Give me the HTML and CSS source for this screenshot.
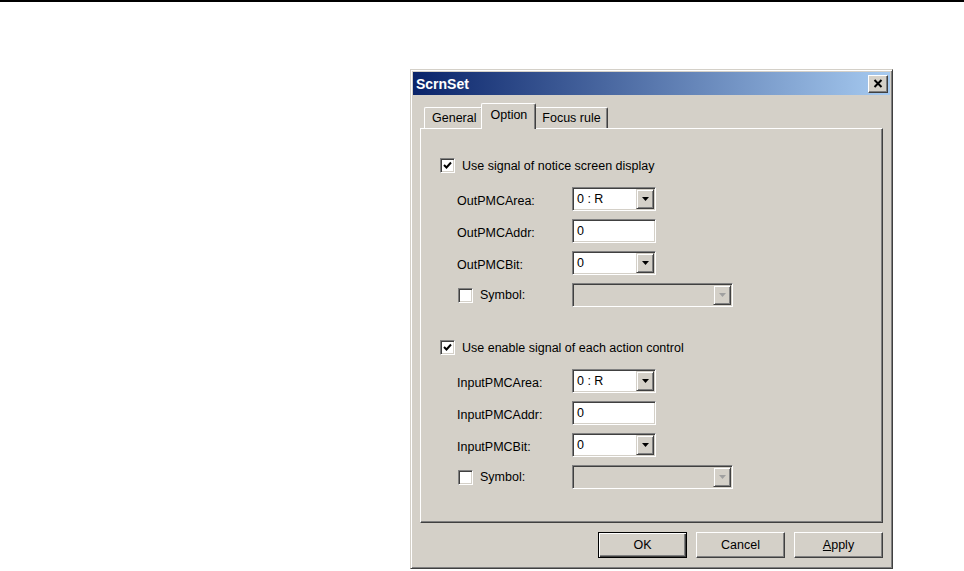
FILE: index.html
```html
<!DOCTYPE html>
<html lang="en">
<head>
  <meta charset="UTF-8">
  <title>ScrnSet</title>
  <link rel="stylesheet" href="styles.css">
</head>
<body>
  <div class="rule"></div>

  <div class="stage">
    <div class="window">
      <div class="titlebar">
        <span class="title">ScrnSet</span>
        <button class="close" type="button">
          <svg width="10" height="9" viewBox="0 0 10 9"><path d="M1.5 1 L8.5 8 M8.5 1 L1.5 8" stroke="#000" stroke-width="2" fill="none"/></svg>
        </button>
      </div>

      <div class="client">
        <div class="tabs">
          <div class="tab">General</div>
          <div class="tab active">Option</div>
          <div class="tab">Focus rule</div>
        </div>

        <div class="panel">
          <!-- notice screen display -->
          <div class="group">
            <div class="check-row">
              <span class="check"><svg width="9" height="9" viewBox="0 0 9 9"><path d="M1 4 L3.5 6.5 L8 1.5" stroke="#000" stroke-width="2" fill="none"/></svg></span>
              <span>Use signal of notice screen display</span>
            </div>
            <div class="fields">
              <div class="field">
                <span class="field-label">OutPMCArea:</span>
                <div class="combo">
                  <span class="combo-text">0 : R</span>
                  <span class="drop"><svg width="7" height="4" viewBox="0 0 7 4"><path d="M0 0 H7 L3.5 4 Z" fill="#000"/></svg></span>
                </div>
              </div>
              <div class="field">
                <span class="field-label">OutPMCAddr:</span>
                <div class="edit">0</div>
              </div>
              <div class="field">
                <span class="field-label">OutPMCBit:</span>
                <div class="combo">
                  <span class="combo-text">0</span>
                  <span class="drop"><svg width="7" height="4" viewBox="0 0 7 4"><path d="M0 0 H7 L3.5 4 Z" fill="#000"/></svg></span>
                </div>
              </div>
              <div class="field">
                <span class="field-label symbol"><span class="check"></span>Symbol:</span>
                <div class="combo wide disabled">
                  <span class="combo-text"></span>
                  <span class="drop"><svg width="7" height="4" viewBox="0 0 7 4"><path d="M0 0 H7 L3.5 4 Z" fill="#a0a0a0"/></svg></span>
                </div>
              </div>
            </div>
          </div>

          <!-- action control enable -->
          <div class="group">
            <div class="check-row">
              <span class="check"><svg width="9" height="9" viewBox="0 0 9 9"><path d="M1 4 L3.5 6.5 L8 1.5" stroke="#000" stroke-width="2" fill="none"/></svg></span>
              <span>Use enable signal of each action control</span>
            </div>
            <div class="fields">
              <div class="field">
                <span class="field-label">InputPMCArea:</span>
                <div class="combo">
                  <span class="combo-text">0 : R</span>
                  <span class="drop"><svg width="7" height="4" viewBox="0 0 7 4"><path d="M0 0 H7 L3.5 4 Z" fill="#000"/></svg></span>
                </div>
              </div>
              <div class="field">
                <span class="field-label">InputPMCAddr:</span>
                <div class="edit">0</div>
              </div>
              <div class="field">
                <span class="field-label">InputPMCBit:</span>
                <div class="combo">
                  <span class="combo-text">0</span>
                  <span class="drop"><svg width="7" height="4" viewBox="0 0 7 4"><path d="M0 0 H7 L3.5 4 Z" fill="#000"/></svg></span>
                </div>
              </div>
              <div class="field">
                <span class="field-label symbol"><span class="check"></span>Symbol:</span>
                <div class="combo wide disabled">
                  <span class="combo-text"></span>
                  <span class="drop"><svg width="7" height="4" viewBox="0 0 7 4"><path d="M0 0 H7 L3.5 4 Z" fill="#a0a0a0"/></svg></span>
                </div>
              </div>
            </div>
          </div>
        </div>

        <div class="buttons">
          <button class="btn default" type="button">OK</button>
          <button class="btn" type="button">Cancel</button>
          <button class="btn" type="button"><u>A</u>pply</button>
        </div>
      </div>
    </div>
  </div>
</body>
</html>
```

FILE: styles.css
```css
body {
  margin: 0;
  background: #fff;
  font-family: "Liberation Sans", Arial, sans-serif;
  font-size: 12.5px;
  color: #000;
}

.rule {
  height: 2px;
  background: #000;
}

.stage {
  padding: 67px 0 0 410px;
}

/* classic dialog frame */
.window {
  width: 483px;
  box-sizing: border-box;
  padding: 2px;
  background: #d4d0c8;
  border: 1px solid;
  border-color: #d4d0c8 #404040 #404040 #d4d0c8;
  box-shadow: inset 1px 1px #fff, inset -1px -1px #808080;
}

.titlebar {
  height: 23px;
  display: flex;
  align-items: center;
  justify-content: space-between;
  padding: 0 2px 0 3px;
  background: linear-gradient(to right, #0a246a, #a6caf0);
}

.title {
  color: #fff;
  font-weight: bold;
  font-size: 14px;
}

.close {
  width: 20px;
  height: 18px;
  padding: 0;
  display: flex;
  align-items: center;
  justify-content: center;
  background: #d4d0c8;
  border: 1px solid;
  border-color: #fff #404040 #404040 #fff;
  box-shadow: inset -1px -1px #808080;
}

.client {
  padding: 8px 7px;
}

.tabs {
  height: 25px;
  display: flex;
  align-items: flex-end;
  padding-left: 4px;
}

.tab {
  height: 21px;
  box-sizing: border-box;
  padding: 3px 6px 0 7px;
  border: 1px solid;
  border-bottom: none;
  border-color: #fff #404040 #404040 #fff;
  border-radius: 2px 2px 0 0;
  box-shadow: inset -1px 0 #808080;
  background: #d4d0c8;
}

.tab.active {
  position: relative;
  z-index: 1;
  height: 26px;
  margin: 0 -2px -1px;
  padding: 4px 8px 0 8px;
}

.panel {
  height: 395px;
  box-sizing: border-box;
  padding: 29px 0 0 19px;
  border: 1px solid;
  border-color: #fff #404040 #404040 #fff;
  box-shadow: inset -1px -1px #808080;
}

.group + .group {
  margin-top: 33px;
}

.check-row {
  display: flex;
  align-items: center;
  gap: 7px;
  height: 15px;
}

/* sunken 3d checkbox */
.check {
  width: 15px;
  height: 15px;
  box-sizing: border-box;
  display: flex;
  align-items: center;
  justify-content: center;
  background: #fff;
  border: 1px solid;
  border-color: #808080 #fff #fff #808080;
  box-shadow: inset 1px 1px #404040, inset -1px -1px #d4d0c8;
}

.fields {
  margin-top: 14px;
  padding-left: 17px;
  display: flex;
  flex-direction: column;
  gap: 8px;
}

.field {
  display: flex;
  align-items: center;
  height: 24px;
}

.field-label {
  width: 115px;
  padding-top: 3px;
}

.field-label.symbol {
  display: flex;
  align-items: center;
  gap: 7px;
  padding-top: 0;
  margin-left: 1px;
  width: 114px;
}

.combo,
.edit {
  width: 84px;
  height: 24px;
  box-sizing: border-box;
  background: #fff;
  border: 1px solid;
  border-color: #808080 #fff #fff #808080;
  box-shadow: inset 1px 1px #404040, inset -1px -1px #d4d0c8;
}

.edit {
  padding: 4px 0 0 4px;
}

.combo {
  display: flex;
  align-items: stretch;
  padding: 1px;
}

.combo.wide {
  width: 161px;
}

.combo.disabled {
  background: #d4d0c8;
}

.combo-text {
  flex: 1;
  padding: 3px 0 0 3px;
}

.drop {
  width: 18px;
  box-sizing: border-box;
  display: flex;
  align-items: center;
  justify-content: center;
  background: #d4d0c8;
  border: 1px solid;
  border-color: #d4d0c8 #404040 #404040 #d4d0c8;
  box-shadow: inset 1px 1px #fff, inset -1px -1px #808080;
}

.buttons {
  margin-top: 9px;
  display: flex;
  justify-content: flex-end;
  gap: 9px;
}

.btn {
  width: 89px;
  height: 26px;
  padding: 0;
  font: inherit;
  color: #000;
  background: #d4d0c8;
  border: 1px solid;
  border-color: #fff #404040 #404040 #fff;
  box-shadow: inset -1px -1px #808080;
}

.btn.default {
  border-color: #000;
  box-shadow: inset 1px 1px #fff, inset -1px -1px #404040, inset -2px -2px #808080;
}
```
